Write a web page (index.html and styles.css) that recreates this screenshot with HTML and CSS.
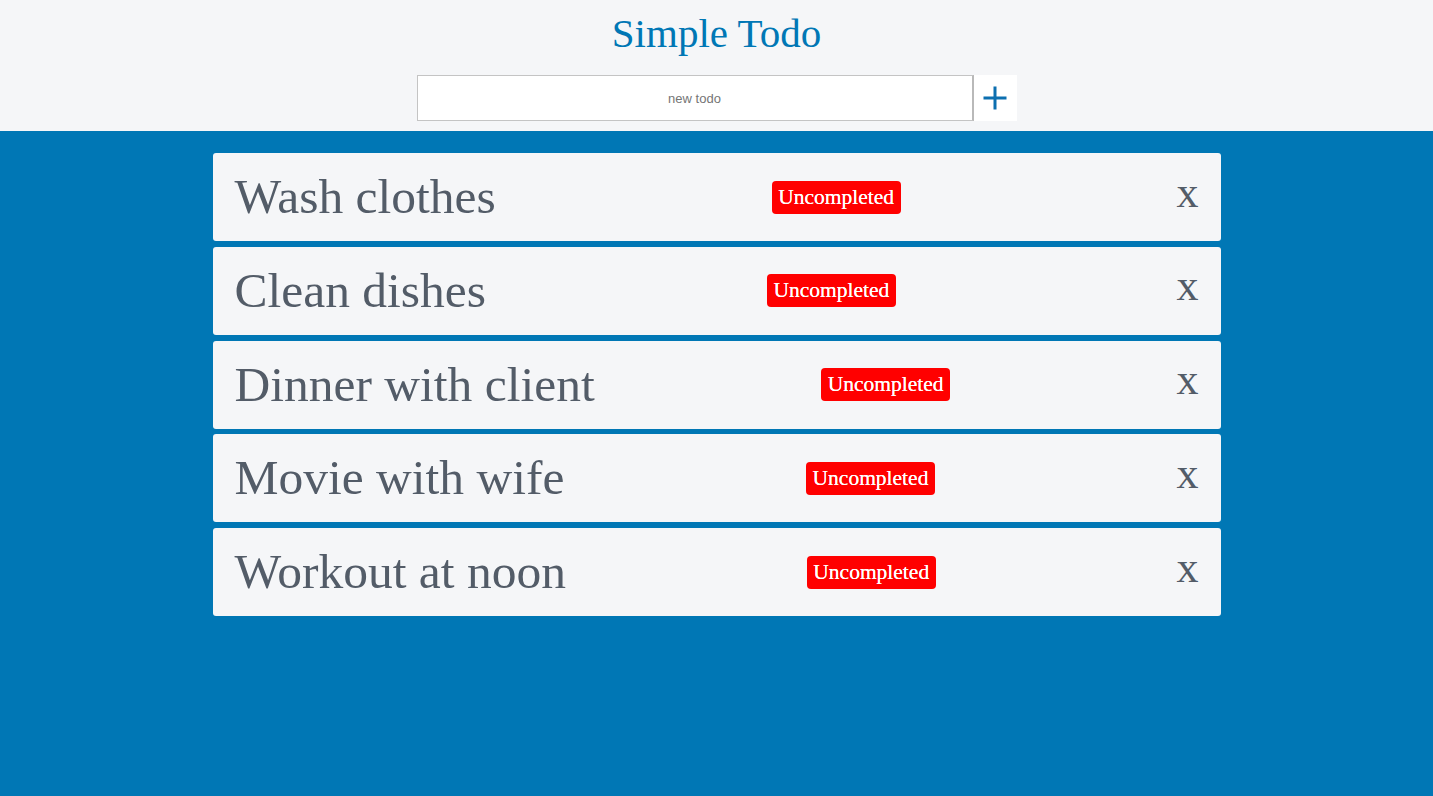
FILE: index.html
```html
<!DOCTYPE html>
<html lang="en">
<head>
<meta charset="utf-8">
<title>Simple Todo</title>
<link rel="stylesheet" href="styles.css">
</head>
<body>
<header class="header">
  <h1 class="title">Simple Todo</h1>
  <form class="add-form">
    <input class="add-input" type="text" placeholder="new todo">
    <button class="add-btn" type="button" aria-label="Add">
      <svg width="24" height="24" viewBox="0 0 24 24"><path d="M12 0.5V23.5M0.5 12H23.5" stroke="#0c6fb0" stroke-width="3" fill="none"/></svg>
    </button>
  </form>
</header>
<main class="list">
  <div class="item"><span class="item-text">Wash clothes</span><span class="badge">Uncompleted</span><span class="remove">x</span></div>
  <div class="item"><span class="item-text">Clean dishes</span><span class="badge">Uncompleted</span><span class="remove">x</span></div>
  <div class="item"><span class="item-text">Dinner with client</span><span class="badge">Uncompleted</span><span class="remove">x</span></div>
  <div class="item"><span class="item-text">Movie with wife</span><span class="badge">Uncompleted</span><span class="remove">x</span></div>
  <div class="item"><span class="item-text">Workout at noon</span><span class="badge">Uncompleted</span><span class="remove">x</span></div>
</main>
</body>
</html>
```

FILE: styles.css
```css
* { box-sizing: border-box; }
html, body {
  margin: 0;
  padding: 0;
  height: 100%;
}
body {
  background: #0077b5;
  font-family: "Liberation Serif", "Times New Roman", serif;
}
.header {
  background: #f5f6f8;
  height: 131px;
  padding-top: 11px;
  display: flex;
  flex-direction: column;
  align-items: center;
}
.title {
  margin: 0;
  font-size: 41px;
  line-height: 45px;
  font-weight: normal;
  color: #0077b5;
}
.add-form {
  margin-top: 19px;
  display: flex;
  width: 600px;
  height: 46px;
}
.add-input {
  flex: 0 0 557px;
  height: 46px;
  margin: 0;
  border: 1px solid #c4c4c4;
  border-right: 2px solid #b9b9b9;
  background: #fff;
  text-align: center;
  font-family: "Liberation Sans", Arial, sans-serif;
  font-size: 13px;
  color: #333;
  outline: none;
}
.add-input::placeholder { color: #757575; }
.add-btn {
  flex: 1;
  margin: 0;
  padding: 0;
  border: 0;
  background: #fff;
  display: flex;
  align-items: center;
  justify-content: center;
}
.add-btn svg { display: block; }
.list {
  width: 1008px;
  margin: 0 auto;
  padding-top: 22px;
  display: flex;
  flex-direction: column;
  gap: 5.75px;
}
.item {
  height: 88px;
  background: #f5f6f8;
  border-radius: 3px;
  padding: 0 22px;
  display: flex;
  align-items: center;
  justify-content: space-between;
  color: #535c68;
}
.item-text {
  font-size: 49.5px;
  padding-bottom: 1px;
}
.badge {
  background: #ff0000;
  color: #fff;
  font-size: 21.5px;
  padding: 4px 6.5px;
  border-radius: 4px;
  text-shadow: 0 0 0.4px #fff;
}
.remove {
  font-size: 44px;
  padding-bottom: 10px;
}
```
